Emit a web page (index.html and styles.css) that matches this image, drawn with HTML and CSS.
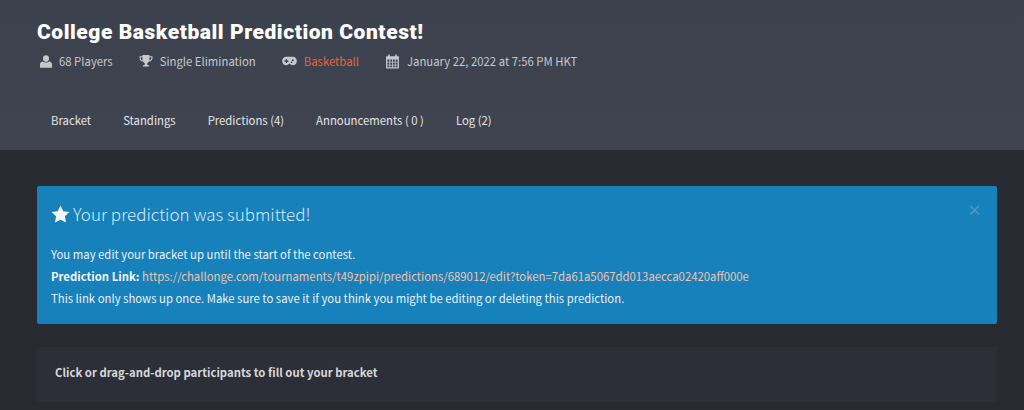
FILE: index.html
```html
<!DOCTYPE html>
<html lang="en">
<head>
<meta charset="utf-8">
<title>College Basketball Prediction Contest!</title>
<link rel="stylesheet" href="styles.css">
</head>
<body>
<header class="hero">
  <h1 class="title">College Basketball Prediction Contest!</h1>
  <ul class="meta">
    <li class="meta-item">
      <svg class="ico ico-user" viewBox="0 0 12 13"><ellipse cx="6" cy="3.600" rx="3" ry="3.300"/><path d="M0 12.800V9.800c0-1.800 1-3.100 2.700-3.300.8.700 2 1.100 3.300 1.100s2.500-.4 3.300-1.100c1.700.2 2.700 1.500 2.700 3.300v3z"/></svg>
      <span>68 Players</span>
    </li>
    <li class="meta-item">
      <svg class="ico ico-cup" viewBox="0 0 14 14"><path fill-rule="evenodd" d="M3.500 1h7v1.200h3V4c0 2-1.500 3.300-3.500 3.600-.5.800-1.100 1.300-1.800 1.600v1.600c1 .1 2 .5 2 1.700H3.800c0-1.200 1-1.600 2-1.700V9.200C5.100 8.900 4.500 8.400 4 7.600 2 7.300.5 6 .5 4V2.200h3zM1.600 3.300V4c0 1.200.8 2 2 2.400-.1-1-.1-2-.1-3.100zm10.800 0h-1.900c0 1.100 0 2.100-.1 3.100 1.200-.4 2-1.200 2-2.400z"/></svg>
      <span>Single Elimination</span>
    </li>
    <li class="meta-item">
      <svg class="ico ico-game" viewBox="0 0 16 10"><path fill-rule="evenodd" d="M4.500 .5h7C14 .5 15.800 2.400 15.800 5s-1.800 4.500-4.300 4.500c-1.400 0-2.300-.7-3-1.500h-1c-.7.800-1.600 1.500-3 1.500C2 9.500.2 7.600.2 5S2 .500 4.500 .500zM4 3v1.300H2.700v1.400H4V7h1.400V5.700h1.300V4.300H5.400V3zm7.500 .2a1 1 0 1 0 0 2 1 1 0 0 0 0-2zm-1.300 2.200a.9.9 0 1 0 0 1.800.9.9 0 0 0 0-1.800z"/></svg>
      <span class="accent">Basketball</span>
    </li>
    <li class="meta-item">
      <svg class="ico ico-cal" viewBox="0 0 14 14"><path fill-rule="evenodd" d="M3 .5h1.500V2h5V.5H11V2h2v11.500H1V2h2zM2.200 5.200v2h1.900v-2zm2.700 0v2h1.700v-2zm2.500 0v2h1.700v-2zm2.500 0v2h1.900v-2zM2.200 8v2h1.900V8zm2.700 0v2h1.700V8zm2.500 0v2h1.700V8zm2.500 0v2h1.900V8zm-7.700 2.800v1.600h1.900v-1.600zm2.700 0v1.600h1.700v-1.600zm2.500 0v1.600h1.700v-1.600zm2.500 0v1.600h1.900v-1.600z"/></svg>
      <span>January 22, 2022 at 7:56 PM HKT</span>
    </li>
  </ul>
  <nav class="tabs">
    <a class="tab">Bracket</a>
    <a class="tab">Standings</a>
    <a class="tab">Predictions (4)</a>
    <a class="tab">Announcements ( 0 )</a>
    <a class="tab">Log (2)</a>
  </nav>
</header>
<main class="content">
  <section class="alert">
    <span class="close">×</span>
    <h2 class="alert-title">
      <svg class="star" viewBox="0 0 20 19"><path d="M10 .6l2.900 5.900 6.500.9-4.700 4.600 1.100 6.500L10 15.500l-5.800 3 1.100-6.500L.6 7.400l6.500-.9z"/></svg>
      Your prediction was submitted!
    </h2>
    <p class="alert-line">You may edit your bracket up until the start of the contest.</p>
    <p class="alert-line"><strong>Prediction Link:</strong> <a class="alert-link">https://challonge.com/tournaments/t49zpipi/predictions/689012/edit?token=7da61a5067dd013aecca02420aff000e</a></p>
    <p class="alert-line">This link only shows up once. Make sure to save it if you think you might be editing or deleting this prediction.</p>
  </section>
  <section class="notice">Click or drag-and-drop participants to fill out your bracket</section>
</main>
</body>
</html>
```
FILE: styles.css
```css
* { box-sizing: border-box; }
html, body { margin: 0; padding: 0; }
body {
  height: 410px;
  overflow: hidden;
  background: #282a32;
  font-family: "Noto Sans CJK SC", "Noto Sans", sans-serif;
  font-size: 11.330px;
}
.hero {
  height: 150px;
  padding: 19px 37px 0;
  background: linear-gradient(#3c414e, #404451);
}
.title {
  margin: 0;
  font-family: "Roboto", sans-serif;
  font-size: 21px;
  line-height: 27px;
  font-weight: 900;
  letter-spacing: .55px;
  color: #fff;
}
.meta {
  display: flex;
  gap: 26px;
  margin: 7px 0 0;
  padding: 0 0 0 3px;
  list-style: none;
  color: #c6c8cd;
  line-height: 16px;
}
.meta-item { display: flex; align-items: center; gap: 7px; }
.ico { fill: #c6c8cd; }
.ico-user { width: 12px; height: 13px; }
.ico-cup { width: 14px; height: 14px; }
.ico-game { width: 15px; height: 10px; }
.ico-cal { width: 15px; height: 15px; }
.accent { color: #e8613a; }
.tabs { display: flex; gap: 32px; margin-top: 42px; padding-left: 14px; }
.tab { color: #e4e5e8; line-height: 18px; }
.content { padding: 36px 27px 0 37px; }
.alert {
  position: relative;
  height: 138px;
  padding: 14px 14px 0;
  border-radius: 2px;
  background: #1681bb;
  color: #e6f1f6;
}
.close {
  position: absolute;
  top: 14px;
  right: 15px;
  font-size: 15px;
  font-weight: 700;
  line-height: 20px;
  color: #4f96c1;
}
.alert-title {
  display: flex;
  align-items: center;
  gap: 3px;
  margin: 0 0 15px;
  font-size: 17px;
  line-height: 28px;
  font-weight: 300;
  color: #d6eaf4;
}
.star { width: 19px; height: 18px; fill: #f4f6f7; }
.alert-line { margin: 0; line-height: 22px; }
.alert-line strong { font-weight: 700; color: #f4f7f9; }
.alert-link { color: #eec4ae; }
.notice {
  height: 55px;
  margin-top: 23px;
  padding: 15px 18px 0;
  background: #2d2f38;
  color: #d7d8da;
  line-height: 20px;
  font-weight: 700;
}
```
